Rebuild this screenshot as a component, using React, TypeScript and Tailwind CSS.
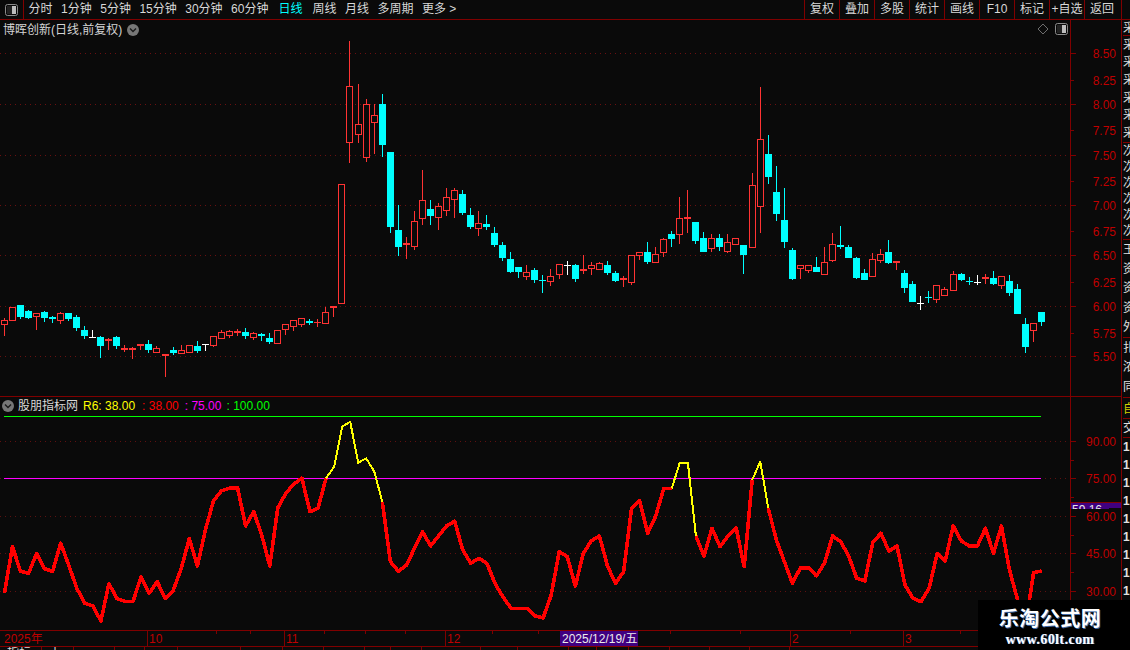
const sans = "font-['Liberation_Sans','Noto_Sans_CJK_SC',sans-serif]";

// kind, body top, body bottom, high, low (page y)
// r hollow red, c filled cyan, d red doji, e cyan doji, w white doji
type Candle = [string, number, number, number, number];

const candles: Candle[] = [
  ["r", 320, 324, 318, 336], ["r", 307, 320, 307, 321], ["c", 305, 317, 305, 319], ["c", 311, 318, 310, 319],
  ["r", 313, 316, 313, 330], ["c", 312, 318, 311, 322], ["c", 317, 319, 316, 323], ["r", 313, 320, 312, 324],
  ["c", 313, 319, 313, 321], ["c", 317, 328, 315, 331], ["c", 330, 336, 326, 339], ["w", 337, 338, 330, 338],
  ["c", 337, 346, 336, 358], ["d", 339, 341, 338, 350], ["c", 337, 346, 336, 349], ["d", 348, 350, 345, 352],
  ["d", 348, 350, 347, 359], ["d", 344, 346, 344, 350], ["c", 344, 350, 340, 353], ["r", 348, 352, 346, 352],
  ["d", 354, 356, 354, 377], ["c", 350, 353, 347, 355], ["r", 350, 353, 345, 354], ["r", 345, 352, 345, 353],
  ["c", 346, 351, 341, 353], ["w", 344, 345, 344, 351], ["r", 336, 345, 336, 347], ["r", 332, 338, 330, 339],
  ["r", 331, 335, 330, 338], ["d", 331, 333, 329, 336], ["c", 332, 336, 328, 339], ["r", 333, 337, 332, 340],
  ["c", 334, 336, 333, 341], ["c", 338, 342, 333, 344], ["r", 330, 343, 330, 343], ["r", 324, 329, 324, 335],
  ["r", 320, 326, 320, 331], ["r", 318, 324, 318, 327], ["c", 321, 323, 319, 325], ["d", 322, 323, 319, 327],
  ["r", 312, 323, 307, 323], ["d", 306, 308, 306, 317], ["r", 184, 303, 184, 304], ["r", 86, 142, 41, 163],
  ["r", 124, 134, 84, 143], ["r", 104, 157, 99, 162], ["r", 115, 122, 104, 154], ["c", 104, 145, 94, 157],
  ["c", 152, 227, 152, 233], ["c", 230, 247, 205, 256], ["d", 243, 245, 237, 259], ["r", 221, 246, 211, 250],
  ["r", 200, 218, 170, 225], ["c", 209, 216, 200, 225], ["r", 206, 217, 203, 230], ["r", 197, 210, 188, 216],
  ["r", 190, 199, 188, 218], ["c", 194, 213, 190, 215], ["c", 215, 227, 208, 229], ["r", 223, 228, 211, 236],
  ["c", 224, 227, 215, 230], ["c", 233, 245, 227, 247], ["c", 245, 258, 242, 261], ["c", 259, 272, 252, 273],
  ["c", 267, 272, 267, 278], ["r", 272, 276, 265, 280], ["c", 270, 280, 268, 283], ["e", 280, 281, 275, 293],
  ["r", 276, 281, 269, 286], ["r", 264, 274, 264, 279], ["w", 265, 266, 261, 275], ["c", 265, 279, 264, 282],
  ["d", 269, 271, 255, 274], ["r", 265, 268, 262, 275], ["r", 263, 269, 262, 270], ["c", 265, 273, 261, 275],
  ["c", 273, 281, 271, 282], ["d", 278, 280, 276, 287], ["r", 255, 282, 255, 285], ["r", 252, 255, 252, 260],
  ["c", 252, 262, 242, 264], ["r", 254, 262, 247, 263], ["r", 239, 252, 238, 257], ["c", 234, 239, 231, 247],
  ["r", 218, 234, 197, 244], ["d", 217, 219, 190, 233], ["c", 222, 241, 222, 244], ["c", 238, 252, 232, 252],
  ["r", 238, 248, 234, 252], ["c", 238, 247, 234, 251], ["r", 242, 251, 234, 253], ["r", 238, 244, 238, 244],
  ["c", 245, 255, 245, 274], ["r", 185, 247, 173, 248], ["r", 139, 206, 87, 233], ["c", 154, 177, 135, 184],
  ["c", 192, 214, 166, 221], ["c", 220, 242, 188, 248], ["c", 250, 279, 248, 280], ["r", 265, 268, 265, 279],
  ["r", 265, 270, 265, 273], ["c", 267, 272, 257, 272], ["r", 262, 274, 247, 274], ["r", 244, 260, 233, 262],
  ["c", 245, 247, 226, 249], ["c", 247, 258, 245, 258], ["c", 258, 278, 257, 279], ["c", 273, 280, 269, 280],
  ["r", 259, 276, 253, 276], ["r", 254, 260, 249, 263], ["c", 252, 263, 240, 264], ["d", 261, 263, 261, 270],
  ["c", 273, 288, 270, 293], ["c", 284, 302, 281, 302], ["w", 303, 304, 296, 310], ["e", 297, 298, 291, 303],
  ["r", 285, 299, 285, 303], ["r", 289, 295, 287, 295], ["r", 274, 290, 271, 290], ["c", 274, 280, 273, 281],
  ["e", 281, 282, 277, 285], ["w", 282, 283, 275, 285], ["d", 277, 279, 274, 284], ["c", 278, 284, 271, 285],
  ["r", 276, 285, 276, 289], ["c", 281, 293, 275, 296], ["c", 289, 314, 284, 314], ["c", 324, 347, 318, 353],
  ["r", 323, 330, 323, 342], ["c", 312, 322, 312, 326],
];

// indicator values, read off the picture (3x zoom y, page y = 410 + v / 3)
const r6 = [
  550, 410, 484, 490, 431, 476, 484, 400, 465, 535, 580, 588, 633, 521, 566, 574, 574, 500, 550, 515, 566, 541, 475,
  386, 468, 360, 272, 242, 235, 234, 348, 305, 375, 468, 293, 250, 222, 205, 305, 295, 205, 170, 50, 35, 158, 145,
  185, 275, 455, 484, 466, 415, 365, 408, 378, 347, 334, 420, 460, 445, 460, 520, 560, 595, 595, 595, 618, 624, 555,
  425, 440, 528, 430, 392, 378, 468, 520, 485, 295, 272, 370, 318, 235, 235, 158, 158, 378, 438, 355, 410, 378, 353,
  470, 210, 155, 295, 390, 455, 520, 473, 473, 498, 458, 378, 395, 438, 505, 513, 398, 370, 423, 408, 525, 565, 575,
  535, 430, 453, 348, 393, 408, 408, 355, 430, 348, 480, 570, 645, 488, 483,
];

const xAt = (i: number) => 4.2 + 8.041 * i;

const pts = (from: number, to: number) =>
  r6
    .slice(from, to + 1)
    .map((v, k) => `${(xAt(from + k) + 0.2).toFixed(1)},${(410 + v / 3).toFixed(1)}`)
    .join(" ");

const redRuns = [[0, 40], [47, 83], [86, 93], [95, 129]];
const yellowRuns = [[40, 47], [83, 86], [93, 95]];

const prices = [
  ["8.50", 53, 1], ["8.25", 80, 0], ["8.00", 104, 1], ["7.75", 130, 0], ["7.50", 155, 1], ["7.25", 181, 0], ["7.00", 205, 1],
  ["6.75", 231, 0], ["6.50", 255, 1], ["6.25", 282, 0], ["6.00", 306, 1], ["5.75", 333, 0], ["5.50", 356, 1],
] as const;

const levels = [
  ["90.00", 441], ["75.00", 478], ["60.00", 516], ["45.00", 553], ["30.00", 591],
] as const;

const leftTabs = ["分时", "1分钟", "5分钟", "15分钟", "30分钟", "60分钟", "日线", "周线", "月线", "多周期", "更多 >"];
const rightTabs = ["复权", "叠加", "多股", "统计", "画线", "F10", "标记", "+自选", "返回"];

const stripTop = [
  { h: "h-[16px]", rows: ["采"] },
  { h: "h-[107px]", rows: ["采", "采", "采", "采", "采", "采"] },
  { h: "h-[97px]", rows: ["次", "次", "次", "次", "次", "次"] },
  { h: "h-[98px]", rows: ["王", "资", "资", "资", "外"] },
  { h: "h-[60px]", rows: ["扎", "浓", "同"] },
];

const stripBottomWidths = [42, 32, 41, 30, 33, 63, 42, 41, 41, 26, 31, 59, 37, 51, 28, 32, 41, 40, 40, 40];

function PanelIcon({ className }: { className: string }) {
  return (
    <svg viewBox="0 0 13 12" className={className} fill="none">
      <rect x="0.5" y="0.5" width="12" height="11" rx="2" stroke="#8a8a8a" />
      <rect x="2" y="2" width="5" height="8" fill="#222222" />
      <rect x="7" y="2" width="4" height="8" fill="#bdbdbd" />
    </svg>
  );
}

function Chevron() {
  return (
    <span className="flex h-3 w-3 items-center justify-center rounded-full bg-[#777777]">
      <svg viewBox="0 0 8 8" className="h-2 w-2" fill="none" stroke="#1a1a1a" strokeWidth="1.4">
        <path d="M1 2.5l3 3 3-3" />
      </svg>
    </span>
  );
}

function CandleMark({ c, i }: { c: Candle; i: number }) {
  const [kind, top, bottom, high, low] = c;
  const x = Math.floor(xAt(i));
  const color = kind === "c" || kind === "e" ? "#00ffff" : kind === "w" ? "#ffffff" : "#ff3333";
  return (
    <g>
      <rect x={x} y={high} width={1} height={Math.max(low - high, 1)} fill={color} />
      {kind === "r" ? (
        <rect x={x - 2.5} y={top + 0.5} width={6} height={bottom - top} fill="#0a0a0a" stroke={color} />
      ) : kind === "w" ? (
        <rect x={x - 3} y={top} width={7} height={1} fill={color} />
      ) : (
        <rect x={x - 3} y={top} width={7} height={Math.max(bottom - top, 1)} fill={color} />
      )}
    </g>
  );
}

function PriceChart() {
  return (
    <div className="relative h-[376px] w-[1070px]">
      <svg viewBox="0 20 1070 376" className="block h-[376px] w-[1070px]" shapeRendering="crispEdges">
        {prices
          .filter((p) => p[2])
          .map((p) => (
            <line key={p[0]} x1="0" x2="1066" y1={p[1] + 0.5} y2={p[1] + 0.5} stroke="#6a1010" strokeDasharray="1 4" />
          ))}
        {candles.map((c, i) => (
          <CandleMark key={i} c={c} i={i} />
        ))}
      </svg>
      <div className="absolute left-[3px] top-[2px] flex items-center gap-[5px] text-[12px] leading-[16px] text-[#d4d4d4]">
        <span>博晖创新(日线,前复权)</span>
        <Chevron />
      </div>
      <div className="absolute right-[2px] top-[3px] flex items-center gap-[6px]">
        <svg viewBox="0 0 12 12" className="h-3 w-3" fill="none" stroke="#6e6e6e">
          <path d="M6 1l5 5-5 5-5-5z" />
        </svg>
        <PanelIcon className="h-3 w-[13px]" />
      </div>
    </div>
  );
}

function PriceAxis() {
  return (
    <svg viewBox="1071 20 50 376" className="block h-[376px] w-[50px]" fontFamily="Liberation Sans" fontSize="12">
      {prices.map((p) => (
        <g key={p[0]}>
          <rect x="1071" y={p[1]} width={p[2] ? 5 : 3} height="1" fill="#800000" />
          <text x="1116" y={p[1] + 5} textAnchor="end" fill="#bf0000">
            {p[0]}
          </text>
        </g>
      ))}
    </svg>
  );
}

function IndicatorChart() {
  return (
    <div className="relative h-[233px] w-[1070px]">
      <svg viewBox="0 397 1070 233" className="block h-[233px] w-[1070px]" fill="none" shapeRendering="crispEdges">
        {levels.map((l) => (
          <line key={l[0]} x1="0" x2="1066" y1={l[1] + 0.5} y2={l[1] + 0.5} stroke="#5e1010" strokeDasharray="1 4" />
        ))}
        <rect x="4" y="416" width="1037" height="1" fill="#00ff00" />
        <rect x="4" y="478" width="1037" height="1" fill="#ff00ff" />
        {redRuns.map(([a, b]) => (
          <polyline key={a} points={pts(a, b)} stroke="#ff0000" strokeWidth="3.6" strokeLinejoin="round" />
        ))}
        {yellowRuns.map(([a, b]) => (
          <polyline key={a} points={pts(a, b)} stroke="#ffff00" strokeWidth="2" strokeLinejoin="round" />
        ))}
      </svg>
      <div className="absolute left-[2px] top-[1px] flex items-center text-[12px] leading-[16px]">
        <Chevron />
        <span className="ml-1 text-[#d8d8d8]">股朋指标网</span>
        <span className="ml-[5px] text-[#ffff00]">R6: 38.00</span>
        <span className="ml-[7px] text-[#ff0000]">: 38.00</span>
        <span className="ml-[6px] text-[#ff00ff]">: 75.00</span>
        <span className="ml-[5px] text-[#00ff00]">: 100.00</span>
      </div>
    </div>
  );
}

function IndicatorAxis() {
  return (
    <svg viewBox="1071 397 50 233" className="block h-[233px] w-[50px]" fontFamily="Liberation Sans" fontSize="12">
      <rect x="1071" y="502" width="50" height="1" fill="#800000" />
      <rect x="1071" y="503" width="50" height="5" fill="#400080" />
      <rect x="1071" y="508" width="38" height="2" fill="#400080" />
      <text x="1072" y="514" fill="#e8e8e8">
        59.16
      </text>
      <rect x="1071" y="509" width="50" height="12" fill="#0a0a0a" />
      {levels.map((l) => (
        <g key={l[0]}>
          <rect x="1071" y={l[1]} width="5" height="1" fill="#800000" />
          <rect x="1071" y={l[1] + 19} width="3" height="1" fill="#800000" />
          <text x="1116" y={l[1] + 5} textAnchor="end" fill="#bf0000">
            {l[0]}
          </text>
        </g>
      ))}
    </svg>
  );
}

function DateAxis() {
  const months = [
    ["10", 147],
    ["11", 284],
    ["12", 445],
    ["2", 790],
    ["3", 903],
  ] as const;
  const ticks = [216, 250, 324, 365, 405, 492, 538, 670, 740, 850, 960];
  return (
    <svg viewBox="0 631 1121 15" className="block h-[15px] w-[1121px]" fontFamily="Liberation Sans, Noto Sans CJK SC" fontSize="12">
      <text x="4" y="643" fill="#bf0000">
        2025年
      </text>
      {months.map(([label, x]) => (
        <g key={label}>
          <rect x={x} y="631" width="1" height="15" fill="#800000" />
          <text x={x + 2} y="643" fill="#bf0000">
            {label}
          </text>
        </g>
      ))}
      {ticks.map((x) => (
        <rect key={x} x={x} y="631" width="1" height="3" fill="#800000" />
      ))}
      <rect x="560" y="631" width="78" height="15" fill="#400080" />
      <text x="562" y="643" fill="#ececec">
        2025/12/19/五
      </text>
    </svg>
  );
}

export default function App() {
  return (
    <div className={`relative flex h-[650px] w-[1130px] flex-col overflow-hidden bg-[#0a0a0a] ${sans}`}>
      <div className="flex h-[20px] shrink-0 items-stretch border-b border-[#800000] text-[12px] leading-[19px] text-[#d8d8d8]">
        <div className="flex w-[24px] items-center justify-center border-r border-[#800000]">
          <PanelIcon className="h-3 w-[13px]" />
        </div>
        <div className="ml-[4.5px] flex gap-[8.5px]">
          {leftTabs.map((t) => (
            <span key={t} className={t === "日线" ? "mx-[1.5px] text-[#00ffff]" : ""}>
              {t}
            </span>
          ))}
        </div>
        <div className="ml-auto mr-[8px] flex border-r border-[#800000]">
          {rightTabs.map((t) => (
            <span key={t} className="w-[35px] whitespace-nowrap border-l border-[#800000] text-center">
              {t}
            </span>
          ))}
          <span className="w-[2px]" />
        </div>
      </div>

      <div className="flex min-h-0 flex-1">
        <div className="flex w-[1121px] shrink-0 flex-col">
          <div className="flex border-b border-[#800000]">
            <div className="border-r border-[#800000]">
              <PriceChart />
            </div>
            <PriceAxis />
          </div>
          <div className="flex border-b border-[#800000]">
            <div className="border-r border-[#800000]">
              <IndicatorChart />
            </div>
            <IndicatorAxis />
          </div>
          <div className="border-b border-[#800000]">
            <DateAxis />
          </div>
          <div className="flex h-[3px] overflow-hidden text-[12px] leading-[13px] text-[#d8d8d8]">
            {stripBottomWidths.map((w, i) => (
              <span key={i} className="overflow-hidden whitespace-nowrap border-r border-[#800000] pl-[7px]" style={{ width: w }}>
                {i === 0 ? "指标" : i === 1 ? "十" : ""}
              </span>
            ))}
          </div>
        </div>

        <div className="flex flex-1 flex-col overflow-hidden border-l border-[#800000] pl-[1px] text-[12px] leading-[14px] text-[#e0e0e0]">
          {stripTop.map((group) => (
            <div key={group.h} className={`flex w-[20px] shrink-0 flex-col justify-around border-b border-[#800000] ${group.h}`}>
              {group.rows.map((ch, k) => (
                <div key={k}>{ch}</div>
              ))}
            </div>
          ))}
          <div className="mt-[3px] h-[18px] w-[20px] shrink-0 border-b border-[#800000] leading-[17px] text-[#d0d000]">自</div>
          <div className="h-[19px] w-[20px] shrink-0 border-b border-[#800000] leading-[18px]">交</div>
          <div className="font-bold leading-[18px]">
            <div>1</div>
            <div>1</div>
            <div>1</div>
            <div>1</div>
            <div>1</div>
            <div>1</div>
            <div>1</div>
            <div>1</div>
            <div>1</div>
          </div>
        </div>
      </div>

      <div className="absolute bottom-0 right-0 flex h-[50px] w-[152px] flex-col items-center bg-black pr-[8px] pt-[7px]">
        <div className="text-[20px] font-bold leading-[24px] tracking-[0.5px] text-white [text-shadow:1px_1px_0_#3f6aa8]">
          乐淘公式网
        </div>
        <div className="font-['Liberation_Serif',serif] text-[14px] font-bold leading-[17px] tracking-[0.4px] text-white [text-shadow:1px_0_0_#3f6aa8]">
          www.60lt.com
        </div>
      </div>
    </div>
  );
}
